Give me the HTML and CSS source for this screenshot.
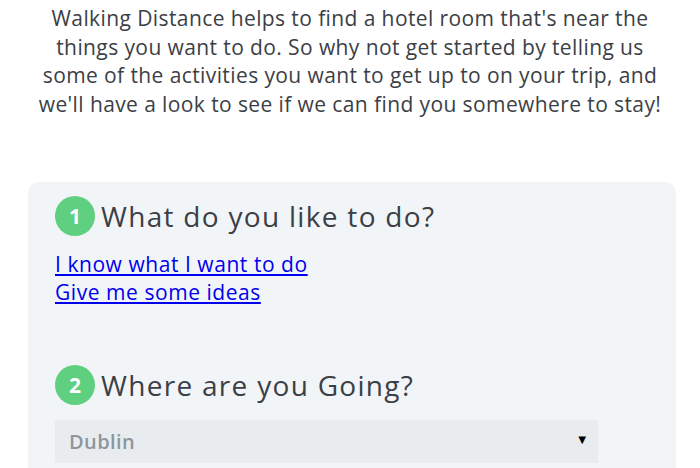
FILE: index.html
```html
<!DOCTYPE html>
<html lang="en">
<head>
    <meta charset="UTF-8">
    <meta name="viewport" content="width=device-width, initial-scale=1.0">
    <title>Walking Distance</title>
    <link rel="stylesheet" href="styles.css">
</head>
<body>
    <p class="intro">
        Walking Distance helps to find a hotel room that's near the things you want to do. So why not get started by telling us some of the activities you want to get up to on your trip, and we'll have a look to see if we can find you somewhere to stay!
    </p>

    <div class="card">
        <div class="step">
            <h2 class="stepTitle"><span class="stepNumber">1</span>What do you like to do?</h2>
            <div class="links">
                <a href="#">I know what I want to do</a>
                <a href="#">Give me some ideas</a>
            </div>
        </div>

        <div class="step">
            <h2 class="stepTitle"><span class="stepNumber">2</span>Where are you Going?</h2>
            <div class="selectBox">
                <span class="selectValue">Dublin</span>
                <span class="selectArrow">&#9660;</span>
            </div>
        </div>
    </div>
</body>
</html>
```

FILE: styles.css
```css
html, body {
    margin: 0;
    background-color: #fff;
    color: #3b4046;
    font-family: "Open Sans", sans-serif;
}

.intro {
    margin: 0 auto;
    padding-top: 4px;
    width: 640px;
    text-align: center;
    font-size: 21px;
    letter-spacing: 0.4px;
    line-height: 28.7px;
}

.card {
    margin: 63px 24px 0 28px;
    padding: 14px 27px 20px 27px;
    background-color: #f2f5f7;
    border-radius: 10px;
    height: 400px;
}

.step {
    margin-bottom: 59px;
}

.stepTitle {
    display: flex;
    align-items: center;
    margin: 0;
    font-size: 28px;
    letter-spacing: 1.3px;
    font-weight: normal;
    color: #3b4046;
}

.stepNumber {
    display: inline-flex;
    align-items: center;
    justify-content: center;
    width: 40px;
    height: 40px;
    margin-right: 6px;
    border-radius: 50%;
    background-color: #5fcf80;
    color: #fff;
    font-size: 21px;
    letter-spacing: 0;
    font-weight: bold;
}

.links {
    display: flex;
    flex-direction: column;
    margin-top: 14px;
    font-size: 21px;
    letter-spacing: 0.55px;
    line-height: 28px;
}

.links a {
    color: #0000ee;
    align-self: flex-start;
}

.selectBox {
    display: flex;
    align-items: center;
    justify-content: space-between;
    margin-top: 15px;
    width: 543px;
    height: 43px;
    padding: 0 9px 0 14px;
    box-sizing: border-box;
    background-color: #e8ecef;
    font-size: 20px;
    letter-spacing: 0.4px;
}

.selectValue {
    color: #8d969e;
    font-weight: 600;
}

.selectArrow {
    font-size: 13px;
    color: #000;
    margin-bottom: 5px;
}
```
